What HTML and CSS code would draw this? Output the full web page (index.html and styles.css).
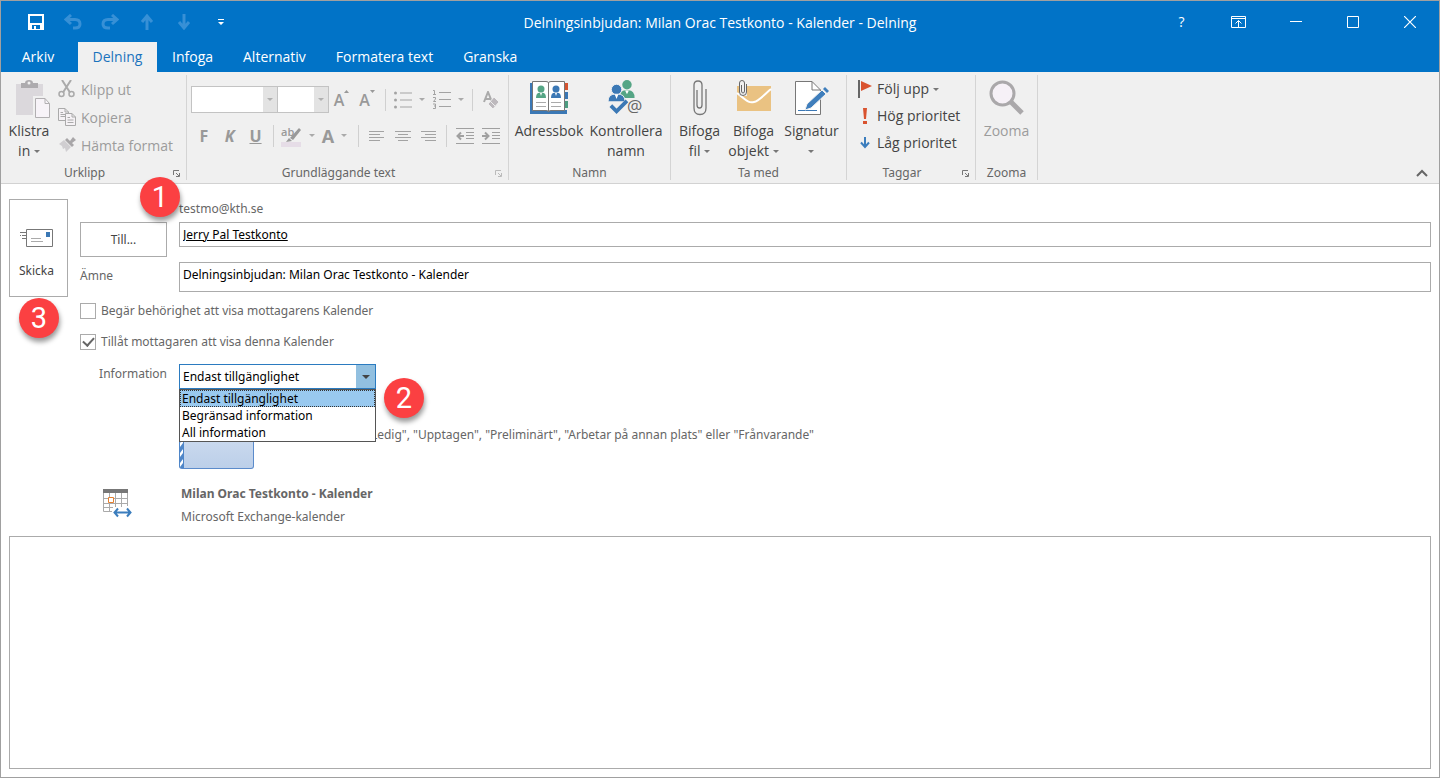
FILE: index.html
```html
<!DOCTYPE html>
<html lang="sv">
<head>
<meta charset="utf-8">
<title>Delningsinbjudan: Milan Orac Testkonto - Kalender - Delning</title>
<link rel="stylesheet" href="styles.css">
</head>
<body>
<div class="window">
  <header class="titlebar">
    <div class="quick">
      <button type="button" aria-label="Spara"><svg width="16" height="16" viewBox="0 0 16 16"><path d="M0 0H16V16H0Z" fill="#fff"/><path d="M2 2H14V9H2ZM4 11H12V15H8V12H6V15H4Z" fill="#0173c7"/></svg></button>
      <button type="button" class="dim" aria-label="Ångra" disabled><svg width="18" height="16" viewBox="0 0 18 16" fill="none" stroke="#3790d6" stroke-width="3"><path d="M7 1L2 5.500L7 10M2 5.500H11Q16 5.500 16 10Q16 14 11 14H9"/></svg></button>
      <button type="button" class="dim" aria-label="Gör om" disabled><svg width="18" height="16" viewBox="0 0 18 16" fill="none" stroke="#3790d6" stroke-width="3"><path d="M11 1L16 5.500L11 10M16 5.500H7Q2 5.500 2 10Q2 14 7 14H9"/></svg></button>
      <button type="button" class="dim" aria-label="Föregående" disabled><svg width="14" height="16" viewBox="0 0 14 16" fill="none" stroke="#3790d6" stroke-width="3"><path d="M7 16V2M2 8L7 2L12 8"/></svg></button>
      <button type="button" class="dim" aria-label="Nästa" disabled><svg width="14" height="16" viewBox="0 0 14 16" fill="none" stroke="#3790d6" stroke-width="3"><path d="M7 0V14M2 8L7 14L12 8"/></svg></button>
      <button type="button" aria-label="Anpassa"><svg width="6" height="6" viewBox="0 0 6 6"><path d="M0 0H6V1H0ZM0 3H6L3 6Z" fill="#fff"/></svg></button>
    </div>
    <h1 class="title">Delningsinbjudan: Milan Orac Testkonto - Kalender - Delning</h1>
    <div class="controls">
      <button type="button">?</button>
      <button type="button" aria-label="Menyfliksområde"><svg width="15" height="12" viewBox="0 0 15 12" fill="none" stroke="#fff"><path d="M.5.5H14.500V11.500H.5ZM.5 2.500H14.500M7.500 11V4.500M4.500 7.500L7.500 4.500L10.500 7.500"/></svg></button>
      <button type="button" aria-label="Minimera"><svg width="12" height="12" viewBox="0 0 12 12"><path d="M0 5H12V6H0Z" fill="#fff"/></svg></button>
      <button type="button" aria-label="Maximera"><svg width="12" height="12" viewBox="0 0 12 12"><path d="M.5.5H11.500V11.500H.5Z" fill="none" stroke="#fff"/></svg></button>
      <button type="button" aria-label="Stäng"><svg width="12" height="12" viewBox="0 0 12 12"><path d="M0 0L12 12M12 0L0 12" stroke="#fff" stroke-width="1.200"/></svg></button>
    </div>
  </header>
  <nav class="tabs">
    <button type="button" class="tab file">Arkiv</button>
    <button type="button" class="tab active">Delning</button>
    <button type="button" class="tab">Infoga</button>
    <button type="button" class="tab">Alternativ</button>
    <button type="button" class="tab">Formatera text</button>
    <button type="button" class="tab">Granska</button>
  </nav>

  <section class="ribbon">
    <div class="group g-clip">
      <div class="group-body">
        <button type="button" class="big paste">
          <svg width="36" height="39" viewBox="0 0 36 39"><path d="M1 4H28V35H1Z" fill="#dbd8dc"/><path d="M6 8V3H10Q10 0 14 0Q18 0 18 3H23V8Z" fill="#adabae"/><circle cx="14" cy="3" r="1.500" fill="#f0f0f0"/><path d="M18 16H36V39H18Z" fill="#f0f0f0"/><path d="M20.500 18.500H30L34.500 23.500V37.500H20.500Z" fill="#f7f3f8" stroke="#b1afb1"/><path d="M30 18.500V23.500H34.500" fill="none" stroke="#b1afb1"/></svg>
          <span>Klistra<br>in <i class="caret"></i></span>
        </button>
        <div class="stack clip">
          <button type="button" class="line" disabled><svg width="18" height="18" viewBox="0 0 18 18" fill="none" stroke="#aaa"><path d="M4 0L12 12.500M13 0L5 12.500" stroke-width="2"/><circle cx="3.500" cy="14" r="2.500" stroke-width="1.500"/><circle cx="13.500" cy="14" r="2.500" stroke-width="1.500"/></svg>Klipp ut</button>
          <button type="button" class="line" disabled><svg width="18" height="18" viewBox="0 0 18 18" fill="#f5f2f5" stroke="#aaa"><path d="M.5.500H7L10.500 4V12.500H.5ZM7 .5V4H10.500M2.500 4.500H5M2.500 6.500H7M2.500 8.500H7"/><path d="M7.500 5.500H14L17.500 9V17.500H7.500ZM14 5.500V9H17.500M9.500 9.500H12M9.500 12H15.500M9.500 14.500H15.500"/></svg>Kopiera</button>
          <button type="button" class="line" disabled><svg width="18" height="16" viewBox="0 0 18 16"><path d="M1 7L6 3L13 10L8 15L7 11L5 12L4 9Z" fill="#d0ced1"/><path d="M7 3L9 1L12 4L15 0L18 3L14 6L16 8L14 10Z" fill="#a8a6a8"/></svg>Hämta format</button>
        </div>
      </div>
      <div class="caption">Urklipp<button type="button" class="launch" aria-label="Urklipp"><svg width="7" height="7" viewBox="0 0 7 7" fill="none" stroke="#777"><path d="M.5 5V.5H6M3 3L6 6M6.500 3V6.500H3"/></svg></button></div>
    </div>

    <div class="group g-text">
      <div class="group-body text-tools">
        <div class="tools">
          <span class="drop wide"><select aria-label="Teckensnitt" disabled></select></span><span class="drop"><select aria-label="Storlek" disabled></select></span>
          <button type="button" class="tool" aria-label="Större" disabled><span class="ga">A</span><svg width="5" height="19" viewBox="0 0 5 19"><path d="M0 3L2.500 0L5 3Z" fill="#999"/></svg></button>
          <button type="button" class="tool" aria-label="Mindre" disabled><span class="ga">A</span><svg width="5" height="19" viewBox="0 0 5 19"><path d="M0 0L2.500 3L5 0Z" fill="#999"/></svg></button>
          <i class="sep"></i>
          <button type="button" class="tool split list" aria-label="Punktlista" disabled><svg width="18" height="18" viewBox="0 0 18 18" fill="#a3a3a3"><circle cx="1.500" cy="2" r="1.500"/><circle cx="1.500" cy="9" r="1.500"/><circle cx="1.500" cy="16" r="1.500"/><path d="M6 1.500H18V2.500H6ZM6 8.500H18V9.500H6ZM6 15.500H18V16.500H6Z"/></svg><i class="caret"></i></button>
          <button type="button" class="tool split list" aria-label="Numrerad lista" disabled><svg width="18" height="19" viewBox="0 0 18 19" fill="#a3a3a3"><path d="M6 2H18V3H6ZM6 9H18V10H6ZM6 16H18V17H6Z"/><path d="M0 .5H1.500V5M0 4.500H3M0 7.500H2.500V9L.5 11.500H3M0 14H2.500V18.500H0M1 16H2.500" fill="none" stroke="#a3a3a3"/></svg><i class="caret"></i></button>
          <i class="sep"></i>
          <button type="button" class="tool" aria-label="Rensa formatering" disabled><svg width="16" height="18" viewBox="0 0 16 18"><path d="M1 11L5 1L9 11M2.500 8H7.500" fill="none" stroke="#aaa" stroke-width="2"/><path d="M11 6L16 11L10 18L5 13Z" fill="#bdb9bd" stroke="#f0f0f0"/><path d="M7 10L12.500 15.500" stroke="#eee"/></svg></button>
        </div>
        <div class="tools">
          <button type="button" class="tool" disabled><b>F</b></button>
          <button type="button" class="tool" disabled><b class="it">K</b></button>
          <button type="button" class="tool" disabled><b class="un">U</b></button>
          <i class="sep"></i>
          <button type="button" class="tool split" aria-label="Överstrykning" disabled><svg width="21" height="24" viewBox="0 0 21 24"><path d="M0 18H20V23H0Z" fill="#e6dde7"/><text x="0" y="12" font-size="11" font-weight="600" fill="#999">ab</text><path d="M18 4L20 6L12 16L9 14Z" fill="#999"/><path d="M8 14L11 17L5 18Z" fill="#999"/></svg><i class="caret"></i></button>
          <button type="button" class="tool split fc" disabled><b>A</b><i class="caret"></i></button>
          <i class="sep"></i>
          <button type="button" class="tool" aria-label="Vänster" disabled><svg width="15" height="12" viewBox="0 0 15 12" fill="none" stroke="#a3a3a3"><path d="M0 1.500H15M0 4.500H11M0 7.500H15M0 10.500H11"/></svg></button>
          <button type="button" class="tool" aria-label="Centrera" disabled><svg width="16" height="12" viewBox="0 0 16 12" fill="none" stroke="#a3a3a3"><path d="M0 1.500H16M3 4.500H13M0 7.500H16M3 10.500H13"/></svg></button>
          <button type="button" class="tool" aria-label="Höger" disabled><svg width="15" height="12" viewBox="0 0 15 12" fill="none" stroke="#a3a3a3"><path d="M0 1.500H15M4 4.500H15M0 7.500H15M4 10.500H15"/></svg></button>
          <i class="sep"></i>
          <button type="button" class="tool" aria-label="Minska indrag" disabled><svg width="18" height="16" viewBox="0 0 18 16" fill="none" stroke="#a0a0a0"><path d="M0 .5H18M10 4.500H18M10 7.500H18M10 10.500H18M0 15.500H18"/><path d="M8 8H2M5 4.500L1.500 8L5 11.500" stroke-width="2"/></svg></button>
          <button type="button" class="tool" aria-label="Öka indrag" disabled><svg width="18" height="16" viewBox="0 0 18 16" fill="none" stroke="#a0a0a0"><path d="M0 .5H18M10 4.500H18M10 7.500H18M10 10.500H18M0 15.500H18"/><path d="M0 8H6M3 4.500L6.500 8L3 11.500" stroke-width="2"/></svg></button>
        </div>
      </div>
      <div class="caption">Grundläggande text<button type="button" class="launch" aria-label="Grundläggande text" disabled><svg width="7" height="7" viewBox="0 0 7 7" fill="none" stroke="#bbb"><path d="M.5 5V.5H6M3 3L6 6M6.500 3V6.500H3"/></svg></button></div>
    </div>

    <div class="group g-name">
      <div class="group-body">
        <button type="button" class="big address">
          <svg width="39" height="36" viewBox="0 0 39 36"><path d="M0 3H37V34H0Z" fill="#3b78b5"/><path d="M34 2H39V35H34Z" fill="#f0f0f0"/><path d="M35 3H38V10H35Z" fill="#d65532"/><path d="M35 12H38V19H35Z" fill="#3b78b5"/><path d="M35 21H38V28H35Z" fill="#4c9c80"/><path d="M34 30H37V34H34Z" fill="#3b78b5"/><path d="M2.500 1.500H16Q18.500 1.500 18.500 3Q18.500 1.500 21 1.500H34.500V30.500H21Q18.500 30.500 18.500 32Q18.500 30.500 16 30.500H2.500Z" fill="#fff" stroke="#777"/><path d="M18.500 3V31" stroke="#777"/><circle cx="11" cy="9" r="3.500" fill="#55a585"/><path d="M6 18Q6 12 11 13Q16 12 16 18Z" fill="#55a585"/><circle cx="26" cy="9" r="3.500" fill="#3b78b5"/><path d="M21 18Q21 12 26 13Q31 12 31 18Z" fill="#3b78b5"/><path d="M6 22.500H16M6 26.500H16M21 22.500H31M21 26.500H31" stroke="#aaa"/><path d="M10 13H12L11 16ZM25 13H27L26 16Z" fill="#fff"/></svg>
          <span>Adressbok</span>
        </button>
        <button type="button" class="big check">
          <svg width="39" height="38" viewBox="0 0 39 38"><circle cx="20" cy="5" r="5" fill="#55a585"/><path d="M13 19Q12 10 20 11Q28 10 28 19Z" fill="#55a585"/><circle cx="9" cy="10" r="5.500" fill="#3b78b5" stroke="#f0f0f0"/><path d="M0 23Q0 14 9 15Q18 14 18 23Z" fill="#3b78b5" stroke="#f0f0f0"/><path d="M7 15H11L9 20ZM18 11H22L20 15Z" fill="#fff"/><path d="M3 27L9 33L20 22" fill="none" stroke="#3b78b5" stroke-width="4"/><text x="20" y="34" font-size="18" fill="#666">@</text></svg>
          <span>Kontrollera<br>namn</span>
        </button>
      </div>
      <div class="caption">Namn</div>
    </div>

    <div class="group g-with">
      <div class="group-body">
        <button type="button" class="big attach">
          <svg width="14" height="36" viewBox="0 0 14 36" fill="none" stroke="#777" stroke-width="1.300"><path d="M4 10V25Q4 28 6.500 28Q9 28 9 25V5Q9 1 5 1Q1 1 1 5V28Q1 34.500 7 34.500Q13 34.500 13 28V9"/></svg>
          <span>Bifoga<br>fil <i class="caret"></i></span>
        </button>
        <button type="button" class="big object">
          <svg width="36" height="36" viewBox="0 0 36 36"><path d="M1 6H35V31H1Z" fill="#eac282"/><path d="M1 13C13 23 14 23 18 22C23 21 29 14 35 9" fill="none" stroke="#fff" stroke-width="2"/><path d="M3 0H11V16H3Z" fill="#f0f0f0"/><path d="M5.500 5V11Q5.500 13 7 13Q8.500 13 8.500 11V3Q8.500 0.500 6 .5Q3.500 .5 3.500 3V12Q3.500 15.500 7 15.500Q10.500 15.500 10.500 12V4" fill="none" stroke="#666"/></svg>
          <span>Bifoga<br>objekt <i class="caret"></i></span>
        </button>
        <button type="button" class="big signature">
          <svg width="34" height="36" viewBox="0 0 34 36"><path d="M.5 1.500H17L25.500 10V34.500H.5Z" fill="#fff" stroke="#777"/><path d="M17 1.500V10H25.500" fill="none" stroke="#777"/><path d="M3 30.500H22" stroke="#3b78b5"/><path d="M10 30L12 24L27 10L31 14L16 28Z" fill="#3f7ebc" stroke="#f0f0f0"/><path d="M28 9L30 7L34 11L32 13Z" fill="#3f7ebc"/></svg>
          <span>Signatur<br><i class="caret"></i></span>
        </button>
      </div>
      <div class="caption">Ta med</div>
    </div>

    <div class="group g-tags">
      <div class="group-body">
        <div class="stack tags">
          <button type="button" class="line"><svg width="14" height="18" viewBox="0 0 14 18"><path d="M0 0H2V18H0Z" fill="#666"/><path d="M3 1L14 6L3 11Z" fill="#d9532f"/></svg><span>Följ upp <i class="caret"></i></span></button>
          <button type="button" class="line"><svg width="14" height="18" viewBox="0 0 14 18"><path d="M5 1H9L8 12H6ZM5 14H9V17H5Z" fill="#d9532f"/></svg>Hög prioritet</button>
          <button type="button" class="line"><svg width="14" height="18" viewBox="0 0 14 18" fill="none" stroke="#3b7dbd" stroke-width="2"><path d="M7 3V13M3 8.500L7 13L11 8.500"/></svg>Låg prioritet</button>
        </div>
      </div>
      <div class="caption">Taggar<button type="button" class="launch" aria-label="Taggar"><svg width="7" height="7" viewBox="0 0 7 7" fill="none" stroke="#777"><path d="M.5 5V.5H6M3 3L6 6M6.500 3V6.500H3"/></svg></button></div>
    </div>

    <div class="group g-zoom">
      <div class="group-body">
        <button type="button" class="big" disabled>
          <svg width="36" height="36" viewBox="0 0 36 36"><path d="M21 21L33 33" stroke="#aaa8aa" stroke-width="5"/><circle cx="13.500" cy="13.500" r="11.500" fill="#f6f1f7" stroke="#aaa8aa" stroke-width="3"/></svg>
          <span>Zooma</span>
        </button>
      </div>
      <div class="caption">Zooma</div>
    </div>
    <button type="button" class="collapse" aria-label="Dölj menyfliksområdet"><svg width="12" height="8" viewBox="0 0 12 8"><path d="M1 7L6 2L11 7" fill="none" stroke="#666" stroke-width="2"/></svg></button>
  </section>

  <main class="form">
    <div class="compose">
      <div class="send-wrap">
        <button type="button" class="send">
          <svg width="33" height="18" viewBox="0 0 33 18"><path d="M6.500.5H32.500V17.500H6.500Z" fill="#fff" stroke="#777"/><path d="M26 3H30V8H26Z" fill="#3b78b5"/><path d="M0 3.500H6M2 6.500H6M2 9.500H6M0 6.500H1" stroke="#777"/><path d="M11 9.500H21M11 12.500H23" stroke="#aaa"/></svg>
          <span>Skicka</span>
        </button>
        <span class="badge b3">3</span>
      </div>
      <div class="fields">
        <div class="row from"><span class="address-text">testmo@kth.se</span><span class="badge b1">1</span></div>
        <div class="row to"><button type="button" class="to-btn">Till...</button><input class="field link" aria-label="Till" value="Jerry Pal Testkonto"></div>
        <div class="row subject"><label for="subject">Ämne</label><input class="field" id="subject" value="Delningsinbjudan: Milan Orac Testkonto - Kalender"></div>
        <label class="option"><input type="checkbox">Begär behörighet att visa mottagarens Kalender</label>
        <label class="option"><input type="checkbox" checked>Tillåt mottagaren att visa denna Kalender</label>
        <div class="row info">
          <label for="detail">Information</label>
          <div class="combo">
            <select id="detail"><option>Endast tillgänglighet</option><option>Begränsad information</option><option>All information</option></select>
            <ul class="menu"><li class="chosen">Endast tillgänglighet</li><li>Begränsad information</li><li>All information</li></ul>
            <span class="badge b2">2</span>
          </div>
        </div>
        <div class="preview">
          <span class="busy"><svg width="5" height="70" viewBox="0 0 5 70"><path d="M0 0H5V70H0Z" fill="#4f86c8"/><path d="M1 14V11L4 7V10ZM1 24V21L4 17V20ZM1 34V31L4 27V30ZM1 47V43L4 39V43ZM1 57V53L4 49V53ZM1 67V63L4 59V63Z" fill="#fff"/></svg></span>
          <span class="desc">"Ledig", "Upptagen", "Preliminärt", "Arbetar på annan plats" eller "Frånvarande"</span>
        </div>
        <div class="row source">
          <svg width="29" height="29" viewBox="0 0 29 29"><path d="M0 0H25V4H0Z" fill="#777"/><path d="M.5 4V22.500H9M24.500 4V17M0 9.500H25M0 14.500H25M0 18.500H12M6.500 4V22M12.500 4V20M18.500 4V18" fill="none" stroke="#aaa"/><path d="M5.500 8.500H10.500V13.500H5.500Z" fill="#fff" stroke="#e5802f"/><path d="M10 18H29V29H10Z" fill="#fff"/><path d="M12 23.500H27M15 19.500L11.500 23.500L15 27.500M24 19.500L27.500 23.500L24 27.500" fill="none" stroke="#3b7dbd" stroke-width="2"/></svg>
          <div class="source-text"><strong>Milan Orac Testkonto - Kalender</strong><span>Microsoft Exchange-kalender</span></div>
        </div>
      </div>
    </div>
    <textarea class="message" aria-label="Meddelande"></textarea>
  </main>
</div>
</body>
</html>
```
FILE: styles.css
```css
* { box-sizing: border-box; }
body { margin: 0; font-family: "Noto Sans", "Open Sans", sans-serif; font-size: 12px; color: #666; }
button, input, select, textarea { font: inherit; color: inherit; margin: 0; border-radius: 0; }
button { border: 0; padding: 0; background: none; }
svg { display: block; flex: none; }
svg text { font-family: "Open Sans", sans-serif; }
.window { min-height: 100vh; display: flex; flex-direction: column; border: 1px solid #a0a0a0; background: #fff; }

.titlebar { display: grid; grid-template-columns: 1fr auto 1fr; height: 41px; background: #0173c7; color: #fff; align-items: center; }
.titlebar, .tabs, .group-body { font-family: "Open Sans", "Noto Sans", sans-serif; }
.quick { display: flex; padding-left: 16px; }
.quick button { width: 37px; height: 38px; display: grid; place-items: center; }
.title { margin: 0; font-size: 14px; font-weight: 400; line-height: 38px; padding-top: 3px; }
.controls { display: flex; justify-content: flex-end; padding-right: 1px; }
.controls button { width: 57px; height: 38px; display: grid; place-items: center; font-size: 14px; }
.tabs { display: flex; height: 30px; background: #0173c7; color: #fff; }
.tab { padding: 0 15px; font-size: 14px; line-height: 30px; }
.tab.file { width: 77px; padding-right: 18px; }
.tab.active { width: 79px; padding: 0; background: #f0f0f0; color: #1a73bd; }

.ribbon { display: flex; height: 112px; padding: 3px 0; background: #f0f0f0; border-bottom: 1px solid #d2d2d2; }
.group { display: flex; flex-direction: column; border-right: 1px solid #d4d4d4; flex: none; }
.g-clip { width: 186px; }
.g-text { width: 322px; }
.g-name { width: 162px; }
.g-with { width: 176px; }
.g-tags { width: 129px; }
.g-zoom { width: 62px; }
.group-body { flex: 1; display: flex; justify-content: center; color: #444; }
.g-name .group-body { padding-right: 5px; }
.g-with .group-body { padding-right: 2px; }
.caption { position: relative; height: 14px; line-height: 14px; text-align: center; font-size: 12px; padding-right: 18px; color: #666; }
.g-name .caption, .g-with .caption, .g-zoom .caption { padding-right: 0; }
.launch { position: absolute; right: 6px; bottom: 3px; }
.caret { display: inline-block; width: 0; height: 0; border: 3px solid transparent; border-top: 3px solid #777; border-bottom: 0; vertical-align: 3px; }
.big { display: flex; flex-direction: column; align-items: center; gap: 5px; padding-top: 5px; font-size: 14px; line-height: 20px; }
.big svg { height: 36px; }
.big:disabled, .line:disabled { color: #9c9c9c; }
.paste { width: 56px; gap: 2px; }
.paste svg { height: 39px; margin-left: 8px; }
.address { width: 78px; }
.check { width: 76px; }
.attach { width: 54px; }
.object { width: 54px; }
.signature { width: 62px; }
.g-zoom .big { width: 60px; }
.stack { flex: 1; display: flex; flex-direction: column; }
.line { display: flex; align-items: center; gap: 5px; height: 28px; font-size: 14px; white-space: nowrap; }
.clip { padding-left: 1px; }
.tags { padding-left: 11px; }
.tags .line { height: 27px; }

.text-tools { flex-direction: column; justify-content: flex-start; padding: 11px 4px 0; gap: 9px; color: #999; }
.tools { display: flex; align-items: center; height: 27px; }
.drop { position: relative; width: 53px; height: 27px; border: 1px solid #c3c3c3; background: #fff; }
.drop.wide { width: 87px; border-right: 0; }
.drop select { appearance: none; width: 100%; height: 100%; border: 0; border-right: 14px solid #e3e3e3; background: #fff; opacity: 1; }
.drop::after { content: ""; position: absolute; right: 4px; top: 11px; border: 3px solid transparent; border-top-color: #b0b0b0; border-bottom: 0; }
.tool { display: flex; justify-content: center; align-items: center; width: 26px; height: 26px; font-size: 16px; line-height: 24px; }
.tool.split { width: 37px; gap: 7px; }
.tool.list { width: 39px; }
.tool .caret { border-top-color: #aaa; }
.tool.fc { font-size: 18px; }
.ga { font-size: 16px; font-weight: 600; }
.it { font-style: italic; }
.un { text-decoration: underline; }
.sep { width: 1px; height: 22px; margin: 0 5px; background: #d0d0d0; }
.collapse { margin: auto 11px 3px auto; }

.form { flex: 1; display: flex; flex-direction: column; padding: 15px 8px 8px; }
.compose { display: flex; gap: 12px; }
.send-wrap { position: relative; width: 59px; flex: none; }
.send { width: 59px; height: 98px; border: 1px solid #ababab; display: flex; flex-direction: column; align-items: center; padding: 29px 4px 0 0; gap: 15px; color: #444; line-height: 18px; }
.fields { flex: 1; display: flex; flex-direction: column; min-width: 0; }
.row { display: grid; grid-template-columns: 87px 1fr; column-gap: 12px; align-items: start; }
.from { position: relative; height: 23px; line-height: 19px; }
.address-text { grid-column: 2; }
.to-btn { height: 35px; border: 1px solid #ababab; color: #444; }
.field { width: 100%; height: 25px; border: 1px solid #ababab; padding: 0 3px; color: #000; background: #fff; }
.field.link { text-decoration: underline; }
.subject { padding-top: 5px; line-height: 28px; }
.subject .field { height: 30px; padding-bottom: 5px; }
.option { display: flex; align-items: center; gap: 5px; height: 31px; }
.subject + .option { margin-top: 3px; }
.option input { appearance: none; width: 16px; height: 16px; border: 1px solid #ababab; background: #fff; display: grid; place-items: center; }
.option input:checked::after { content: ""; width: 5px; height: 9px; border: solid #666; border-width: 0 2px 2px 0; rotate: 42deg; margin-bottom: 3px; }
.info { margin-top: 7px; line-height: 20px; }
.info > label { text-align: right; }
.combo { position: relative; width: 197px; height: 25px; }
.combo select { appearance: none; width: 100%; height: 25px; border: 1px solid #2b7bc0; border-right: 20px solid #92c0e0; padding: 0 3px; color: #000; background: #fff; outline: 1px solid #2b7bc0; outline-offset: -1px; }
.combo::after { content: ""; position: absolute; right: 6px; top: 11px; border: 4px solid transparent; border-top-color: #444; border-bottom: 0; }
.menu { position: absolute; z-index: 2; left: 0; top: 25px; width: 197px; margin: 0; padding: 0; list-style: none; border: 1px solid #555; background: #fff; color: #000; line-height: 17px; }
.menu li { padding-left: 2px; }
.menu .chosen { height: 17px; background: #99c9ef; outline: 1px dotted #333; outline-offset: -1px; }
.preview { display: flex; align-items: center; margin: 10px 0 0 99px; height: 70px; }
.busy { width: 75px; height: 70px; border: 1px solid #5b8bcb; border-width: 1px 1px 1px 0; border-radius: 3px; overflow: hidden; background: linear-gradient(#dde7f5, #bccfe9); }
.desc { margin-left: 112px; white-space: nowrap; }
.source { margin-top: 20px; height: 47px; }
.source svg { margin-left: 23px; }
.source-text { display: flex; flex-direction: column; gap: 7px; padding-left: 2px; line-height: 16px; margin-top: -3px; }
.message { flex: 1; width: 100%; border: 1px solid #ababab; resize: none; background: #fff; }

.badge { position: absolute; z-index: 3; width: 40px; height: 40px; border-radius: 50%; background: #fb4042; color: #fff; box-shadow: 1px 4px 5px #0006; font: 29px/40px Roboto, sans-serif; text-align: center; }
.b1 { left: 60px; top: -22px; }
.b2 { left: 205px; top: 14px; }
.b3 { left: 10px; top: 99px; }
```
